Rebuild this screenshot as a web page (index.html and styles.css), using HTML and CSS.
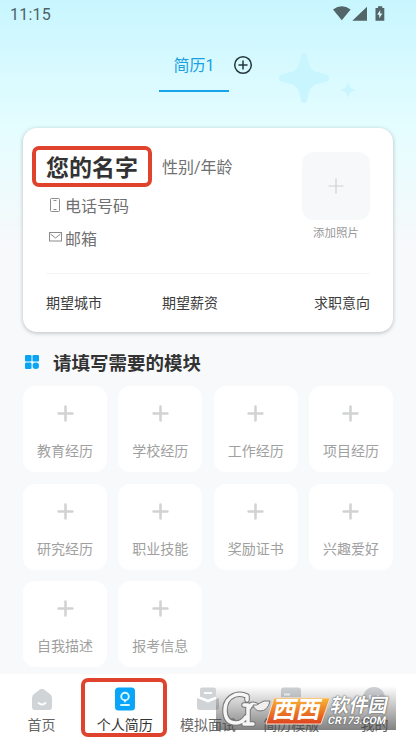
FILE: index.html
```html
<!DOCTYPE html>
<html lang="zh-CN">
<head>
<meta charset="utf-8">
<title>个人简历</title>
<link rel="stylesheet" href="styles.css">
</head>
<body>
<svg class="defs" width="0" height="0"><symbol id="plus" viewBox="0 0 16 16"><path d="M8 1.5v13M1.5 8h13" stroke="#d0d2d4" stroke-width="2.4" stroke-linecap="round"/></symbol></svg>
<div class="screen">
  <header class="status">
    <span>11:15</span>
    <svg width="54" height="16" viewBox="0 0 54 16" fill="#526669"><path d="M0 3.4Q8.8-3 17.6 3.400L8.8 14.200zM34 .8V14.8H19.300zM42.500 2h2.5V.2h4.300V2h2v12.800H42.500z"/><path d="M47.200 4l-3 4.800h2v3.500l3.200-4.900h-2.200z" fill="#d9f8fd"/></svg>
  </header>
  <svg class="stars" width="80" height="56" viewBox="0 0 80 56" fill="#c9f5fe"><path d="M26 1C29 1 29 4 30 8C32 17 34 19 43 21C48 22 51 23 51 26C51 29 48 30 43 31C34 33 32 35 30 44C29 49 29 51 26 51C23 51 23 48 22 44C20 35 18 33 9 31C4 30 1 29 1 26C1 23 4 22 9 21C18 19 20 17 22 8C23 4 23 1 26 1Z"/><path d="M70 30Q71 37 78 38Q71 39 70 46Q69 39 62 38Q69 37 70 30Z"/></svg>
  <nav class="tabs">
    <span class="tab">简历1</span>
    <svg class="add" width="20" height="20" viewBox="0 0 20 20" fill="none" stroke="#25383c" stroke-width="1.5"><circle cx="10" cy="10" r="8.3"/><path d="M10 6v8M6 10h8" stroke-linecap="round"/></svg>
  </nav>
  <section class="card">
    <div class="profile">
      <div class="info">
        <div class="identity"><h1>您的名字</h1><span>性别/年龄</span></div>
        <div class="contact"><svg width="19" height="16" viewBox="0 0 19 16" fill="none" stroke="#8c8c8c"><rect x="4.500" y="1.500" width="9" height="13" rx="1"/><path d="M7.500 3.500h3M7.500 12.500h3"/></svg>电话号码</div>
        <div class="contact"><svg width="19" height="16" viewBox="0 0 19 16" fill="none" stroke="#8c8c8c"><rect x="3.500" y="2.500" width="12" height="8.500"/><path d="M4.500 4l5 4 5-4"/></svg>邮箱</div>
      </div>
      <div class="photo"><div class="photo-box"><svg width="16" height="16" viewBox="0 0 16 16"><path d="M8 .5v15M.5 8h15" stroke="#cfd0d2" stroke-width="1.200"/></svg></div><span>添加照片</span></div>
    </div>
    <div class="wishes"><span>期望城市</span><span>期望薪资</span><span>求职意向</span></div>
  </section>
  <h2><svg width="14" height="14" viewBox="0 0 14 14" fill="#08a5f5"><rect width="6.500" height="6.500" rx="1.200"/><rect x="7.500" width="6.500" height="6.500" rx="1.200"/><rect y="7.500" width="6.500" height="6.500" rx="1.200"/><circle cx="10.800" cy="10.800" r="3.200"/></svg>请填写需要的模块</h2>
  <main class="modules">
    <div class="tile"><svg><use href="#plus"/></svg>教育经历</div>
    <div class="tile"><svg><use href="#plus"/></svg>学校经历</div>
    <div class="tile"><svg><use href="#plus"/></svg>工作经历</div>
    <div class="tile"><svg><use href="#plus"/></svg>项目经历</div>
    <div class="tile"><svg><use href="#plus"/></svg>研究经历</div>
    <div class="tile"><svg><use href="#plus"/></svg>职业技能</div>
    <div class="tile"><svg><use href="#plus"/></svg>奖励证书</div>
    <div class="tile"><svg><use href="#plus"/></svg>兴趣爱好</div>
    <div class="tile"><svg><use href="#plus"/></svg>自我描述</div>
    <div class="tile"><svg><use href="#plus"/></svg>报考信息</div>
  </main>
  <footer class="bottom">
    <div class="item"><svg width="24" height="24" viewBox="0 0 24 24"><path d="M10 2.500q2-1.500 4 0l6 4.500q2 1.500 2 4v9q0 3-3 3H5q-3 0-3-3v-9q0-2.500 2-4z" fill="#d0d4d6"/><path d="M8.500 16q3.500 3 7 0" fill="none" stroke="#fff" stroke-width="1.800" stroke-linecap="round"/></svg>首页</div>
    <div class="item active"><svg width="24" height="24" viewBox="0 0 24 24" fill="none"><rect x="2" y=".5" width="20" height="23" rx="3.500" fill="#08a5fb"/><g stroke="#d9f7ff" stroke-width="1.900" stroke-linecap="round"><circle cx="12" cy="9.500" r="3.800"/><path d="M8 18h8M12 13.500v1"/></g></svg>个人简历</div>
    <div class="item"><svg width="24" height="24" viewBox="0 0 24 24"><path d="M6 .5h12q2 0 2 2v7l-8 3-8-3v-7q0-2 2-2z" fill="#d0d4d6"/><path d="M1 11l11 4.500L23 11v9q0 3-3 3H4q-3 0-3-3z" fill="#d0d4d6"/><path d="M8 6h8" stroke="#fff" stroke-width="1.800"/></svg>模拟面试</div>
    <div class="item"><svg width="24" height="24" viewBox="0 0 24 24"><rect x="2" y=".5" width="20" height="23" rx="3" fill="#d0d4d6"/><path d="M5 7.500h6M2 11.500h20" stroke="#fff" stroke-width="1.800"/></svg>简历模版</div>
    <div class="item"><svg width="24" height="24" viewBox="0 0 24 24"><circle cx="12" cy="11" r="11" fill="#d0d4d6"/><path d="M8 8v4M16 8v4" stroke="#fff" stroke-width="2"/></svg>我的</div>
  </footer>
  <div class="mark name-mark"></div>
  <div class="mark nav-mark"></div>
  <div class="watermark">
    <svg width="180" height="44" viewBox="0 0 180 44">
      <defs>
        <linearGradient id="orange" x2="0" y2="1"><stop stop-color="#f7b53c"/><stop offset=".5" stop-color="#ed7c25"/><stop offset="1" stop-color="#de4220"/></linearGradient>
        <path id="emblem" d="M31 14V10Q25 7 19 9Q9 13 9 24Q9 37 20 37Q26 37 30 31M28 19H32V38H28H37M33 22Q35 17 40 19"/>
      </defs>
      <g fill="none" stroke-linecap="round" stroke-linejoin="round"><use href="#emblem" stroke="#777" stroke-width="5.500"/><use href="#emblem" stroke="#f6f6f6" stroke-width="3.500"/></g>
      <path d="M37 19q4 1 7-2t10-2q-2 10-10 10q-5 0-7-6z" fill="#f0f0f0" stroke="#777"/>
      <path d="M58 12h56l-9 26H50z" fill="url(#orange)" stroke="#f5ddc7"/>
    </svg>
    <span class="wm-west">西西</span><span class="wm-soft">软件园</span><span class="wm-url">CR173.COM</span>
  </div>
</div>
</body>
</html>
```
FILE: styles.css
```css
* { box-sizing: border-box; }
body { margin: 0; font-family: Roboto, "Noto Sans CJK SC", sans-serif; font-weight: 400; }
.defs { position: absolute; }
.screen { position: relative; width: 416px; height: 740px; overflow: hidden; display: flex; flex-direction: column; background: linear-gradient(#c8f6ff 0, #e5fdff 130px, #f7f9fb 245px, #f7f9fb 100%); }
.status { height: 32px; flex: none; display: flex; justify-content: space-between; padding: 6px 29px 0 10px; font-size: 16px; line-height: 18px; color: #4e6367; letter-spacing: .2px; }
.stars { position: absolute; left: 278px; top: 52px; }
.tabs { height: 60px; flex: none; display: flex; padding-left: 159px; }
.tab { width: 70px; height: 60px; border-bottom: 2px solid #16a5eb; text-align: center; font-size: 16px; line-height: 68px; color: #1a9fe3; }
.add { margin: 23px 0 0 4px; }
.card { flex: none; width: 370px; height: 204px; margin: 36px 0 0 23px; border-radius: 14px; background: #fff; box-shadow: 0 1px 4px rgba(0,0,0,.25); padding: 24px 23px 0; color: #3c3c3c; }
.profile { height: 122px; display: flex; justify-content: space-between; border-bottom: 1px solid #f5f5f5; }
.info { color: #707070; font-size: 16px; }
.identity { display: flex; height: 32px; line-height: 32px; }
h1 { margin: 0; width: 116px; font-size: 23px; line-height: 33px; color: #333; font-weight: 700; }
.contact { display: flex; align-items: center; height: 24px; margin-top: 9px; }
.contact svg { flex: none; }
.photo { width: 68px; text-align: center; font-size: 11.5px; color: #999; line-height: 27px; }
.photo-box { width: 68px; height: 68px; border-radius: 12px; background: #f7f8fa; display: flex; align-items: center; justify-content: center; }
.wishes { display: flex; font-size: 14px; line-height: 58px; }
.wishes span { width: 116px; }
.wishes span:last-child { margin-left: auto; width: auto; }
h2 { display: flex; align-items: center; gap: 14px; height: 30px; flex: none; margin: 15px 0 9px 25px; font-size: 18.5px; font-weight: 700; color: #333; }
.modules { flex: none; display: grid; grid-template-columns: repeat(4, 84px); grid-auto-rows: 86px; justify-content: space-between; row-gap: 11.5px; padding: 0 23px; }
.tile { display: flex; flex-direction: column; align-items: center; background: #fff; border-radius: 12px; padding-top: 19px; font-size: 14px; line-height: 20px; color: #a0a0a0; }
.tile svg { width: 17px; height: 17px; margin-bottom: 19px; }
.bottom { flex: none; margin-top: 7px; height: 66px; background: #fff; display: grid; grid-template-columns: repeat(5, 1fr); font-size: 14px; line-height: 20px; color: #666; }
.item { display: flex; flex-direction: column; align-items: center; padding-top: 13px; gap: 4px; }
.active { color: #333; }
.mark { position: absolute; border: 4px solid #df432e; border-radius: 7px; }
.name-mark { left: 32px; top: 146px; width: 120px; height: 41px; }
.nav-mark { left: 81px; top: 678px; width: 86px; height: 59px; }
.watermark { position: absolute; left: 216px; top: 686px; width: 180px; height: 44px; background: linear-gradient(transparent, rgba(70,70,70,.68)); color: #fff; }
.watermark svg { position: absolute; left: 0; top: 0; }
.watermark span { position: absolute; font-weight: 700; transform: skewX(-12deg); white-space: nowrap; text-shadow: 0 0 2px #555, 0 0 1px #555; }
.watermark .wm-west { left: 57px; top: 12px; font-size: 24px; line-height: 25px; text-shadow: none; }
.wm-soft { left: 115px; top: 9px; font-size: 19px; line-height: 21px; }
.wm-url { left: 112px; top: 29px; font-size: 10.5px; line-height: 11px; }
```
